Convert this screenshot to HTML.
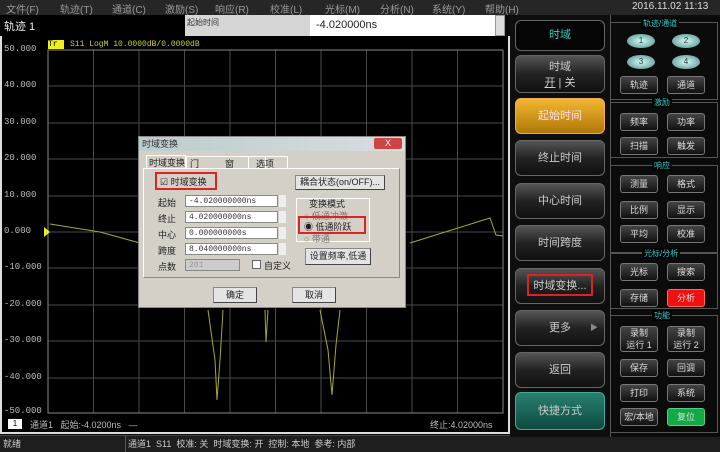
<!DOCTYPE html>
<html><head><meta charset="utf-8"><style>
*{margin:0;padding:0;box-sizing:border-box}
body{width:720px;height:452px;background:#0a0a0a;position:relative;overflow:hidden;font-family:"Liberation Sans","Noto Sans CJK SC",sans-serif;font-size:10px;color:#ccc}
.a{position:absolute}
.menu{left:0;top:0;width:720px;height:15px;background:#262626;color:#999;font-size:10px}
.menu span{position:absolute;top:1px}
.sk{position:absolute;left:515px;width:90px;border:1px solid #666;border-radius:6px;background:linear-gradient(#555,#222 50%,#111);color:#ccc;font-size:11px;text-align:center}
.rb{position:absolute;width:38px;height:18px;border:1px solid #777;border-radius:3px;background:linear-gradient(#444,#111);color:#ddd;font-size:9px;text-align:center;line-height:16px}
.sec{position:absolute;left:610px;width:108px;border:1px solid #555;}
.st{position:absolute;font-size:8px;color:#3cc;background:#000;padding:0 2px}
.ov{position:absolute;width:28px;height:14px;border-radius:50%;background:radial-gradient(#cfe,#7aa 70%,#466);color:#234;font-size:8px;text-align:center;line-height:14px}
.yl{position:absolute;left:4px;width:40px;color:#bbb;font-family:"Liberation Mono",monospace;font-size:9px}
.dl{position:absolute;font-size:9px;color:#222;white-space:nowrap}
.inp{position:absolute;background:#fff;border:1px solid #888;height:12px;font-size:8px;color:#333;padding-left:3px;line-height:11px;font-family:"Liberation Mono",monospace}
.btn{position:absolute;background:#e4e4e4;border:1px solid #888;border-right-color:#444;border-bottom-color:#444;font-size:9px;color:#222;text-align:center;white-space:nowrap}
</style></head><body>
<div class="a menu">
<span style="left:6px">文件(F)</span><span style="left:60px">轨迹(T)</span><span style="left:112px">通道(C)</span><span style="left:165px">激励(S)</span><span style="left:215px">响应(R)</span><span style="left:270px">校准(L)</span><span style="left:325px">光标(M)</span><span style="left:380px">分析(N)</span><span style="left:432px">系统(Y)</span><span style="left:485px">帮助(H)</span><span style="left:632px;color:#ddd">2016.11.02 11:13</span>
</div>
<div class="a" style="left:0;top:15px;width:185px;height:21px;background:#000;color:#eee;font-size:11px;padding:3px 4px">轨迹 1</div>
<div class="a" style="left:185px;top:15px;width:125px;height:21px;background:#d6d6d6;color:#333;font-size:8px;padding:2px">起始时间</div>
<div class="a" style="left:310px;top:15px;width:185px;height:21px;background:#fff;color:#222;font-size:11px;padding:4px 6px">-4.020000ns</div>
<div class="a" style="left:495px;top:15px;width:10px;height:21px;background:#ddd;border:1px solid #999"></div>
<div class="a" style="left:0;top:36px;width:510px;height:398px;border:2px solid #ddd;border-top:none;background:#000"></div>
<div class="a" style="left:48px;top:40px;width:16px;height:9px;background:#ee2;color:#000;font-size:8px;font-family:'Liberation Mono',monospace;line-height:9px">Tr 1</div>
<div class="a" style="left:70px;top:40px;color:#cc3;font-size:8px;font-family:'Liberation Mono',monospace">S11 LogM 10.0000dB/0.0000dB</div>
<svg class="a" style="left:0;top:0" width="510" height="434">
<g stroke="#4a4a4a" stroke-width="1">
<path d="M48 50H503M48 86H503M48 123H503M48 159H503M48 196H503M48 232H503M48 268H503M48 305H503M48 341H503M48 378H503M48 413H503"/>
<path d="M48 50V413M93.5 50V413M139 50V413M184.5 50V413M230 50V413M275.5 50V413M321 50V413M366.5 50V413M412 50V413M457.5 50V413M503 50V413"/>
</g>
<rect x="48" y="50" width="455" height="363" fill="none" stroke="#888"/>
<g stroke="#a8a830" stroke-width="1" fill="none">
<path d="M50 224L100 232L140 243"/>
<path d="M410 243L490 218L496 235L503 236"/>
<path d="M208 310L215 360L217 400L220 360L223 310"/>
<path d="M265 310L266 342L268 310"/>
<path d="M320 310L328 350L332 395L336 345L340 310"/>
</g>
<path d="M44 227L50 232L44 237Z" fill="#ee2"/>
</svg>
<div class="yl" style="top:44px">50.000</div>
<div class="yl" style="top:80px">40.000</div>
<div class="yl" style="top:117px">30.000</div>
<div class="yl" style="top:153px">20.000</div>
<div class="yl" style="top:190px">10.000</div>
<div class="yl" style="top:226px">0.000</div>
<div class="yl" style="top:262px">-10.000</div>
<div class="yl" style="top:299px">-20.000</div>
<div class="yl" style="top:335px">-30.000</div>
<div class="yl" style="top:372px">-40.000</div>
<div class="yl" style="top:406px">-50.000</div>
<div class="a" style="left:8px;top:419px;width:14px;height:10px;background:#fff;color:#000;font-size:8px;text-align:center;line-height:10px">1</div>
<div class="a" style="left:30px;top:418px;color:#bbb;font-size:9px">通道1 &nbsp;&nbsp;起始:-4.0200ns &nbsp;&nbsp;—</div>
<div class="a" style="left:430px;top:418px;color:#bbb;font-size:9px">终止:4.02000ns</div>
<div class="a" style="left:0;top:435px;width:720px;height:17px;background:#1e1e1e;border-top:1px solid #444"></div>
<div class="a" style="left:3px;top:437px;color:#ccc;font-size:9px">就绪</div>
<div class="a" style="left:125px;top:435px;width:1px;height:17px;background:#555"></div>
<div class="a" style="left:128px;top:437px;color:#ccc;font-size:9px">通道1 &nbsp;S11 &nbsp;校准: 关 &nbsp;时域变换: 开 &nbsp;控制: 本地 &nbsp;参考: 内部</div>
<!-- dialog -->
<div class="a" style="left:138px;top:136px;width:268px;height:172px;background:#d4d0c8;border:1px solid #888"></div>
<div class="a" style="left:139px;top:137px;width:266px;height:14px;background:linear-gradient(90deg,#bcc,#d8dde0);color:#333;font-size:9px;padding-left:3px">时域变换</div>
<div class="a" style="left:374px;top:138px;width:28px;height:11px;background:#c44;color:#fff;font-size:9px;text-align:center;line-height:11px;border-radius:2px">X</div>
<div class="a" style="left:146px;top:155px;width:40px;height:13px;background:#d4d0c8;border:1px solid #fff;border-bottom:none;font-size:9px;color:#222;padding-left:2px;white-space:nowrap">时域变换</div>
<div class="a" style="left:186px;top:156px;width:80px;height:12px;border:1px solid #fff;border-bottom:none"></div>
<div class="dl" style="left:190px;top:157px">门</div>
<div class="dl" style="left:225px;top:157px">窗</div>
<div class="a" style="left:248px;top:156px;width:40px;height:12px;border:1px solid #fff;border-bottom:none"></div>
<div class="dl" style="left:256px;top:157px">选项</div>
<div class="a" style="left:143px;top:168px;width:257px;height:110px;border:1px solid #fff;border-right-color:#888;border-bottom-color:#888"></div>
<div class="a" style="left:155px;top:172px;width:62px;height:18px;border:2px solid #d22"></div>
<div class="dl" style="left:160px;top:175px">☑ 时域变换</div>
<div class="dl" style="left:158px;top:196px">起始</div><div class="inp" style="left:185px;top:195px;width:93px">-4.020000000ns</div>
<div class="dl" style="left:158px;top:212px">终止</div><div class="inp" style="left:185px;top:211px;width:93px">4.020000000ns</div>
<div class="dl" style="left:158px;top:228px">中心</div><div class="inp" style="left:185px;top:227px;width:93px">0.000000000s</div>
<div class="dl" style="left:158px;top:244px">跨度</div><div class="inp" style="left:185px;top:243px;width:93px">8.040000000ns</div>
<div class="dl" style="left:158px;top:260px">点数</div><div class="inp" style="left:185px;top:259px;width:55px;background:#ccc;color:#999">201</div>
<div class="a" style="left:279px;top:195px;width:7px;height:60px;background:repeating-linear-gradient(#eee 0 12px,#d4d0c8 12px 16px)"></div>
<div class="a" style="left:252px;top:260px;width:9px;height:9px;background:#fff;border:1px solid #666"></div>
<div class="dl" style="left:264px;top:259px">自定义</div>
<div class="btn" style="left:295px;top:175px;width:90px;height:15px;line-height:13px">耦合状态(on/OFF)...</div>
<div class="a" style="left:296px;top:198px;width:74px;height:44px;border:1px solid #fff"></div>
<div class="dl" style="left:309px;top:197px">变换模式</div>
<div class="dl" style="left:304px;top:209px;color:#777">○ 低通冲激</div>
<div class="a" style="left:298px;top:216px;width:68px;height:18px;border:2px solid #d22"></div>
<div class="dl" style="left:304px;top:220px">◉ 低通阶跃</div>
<div class="dl" style="left:304px;top:232px;color:#777">○ 带通</div>
<div class="btn" style="left:305px;top:248px;width:66px;height:17px;line-height:15px">设置频率,低通</div>
<div class="btn" style="left:213px;top:287px;width:44px;height:16px;line-height:14px">确定</div>
<div class="btn" style="left:292px;top:287px;width:44px;height:16px;line-height:14px">取消</div>
<!-- softkeys -->
<div class="a" style="left:510px;top:15px;width:100px;height:422px;background:#0e0e0e"></div>
<div class="sk" style="top:20px;height:31px;background:#050505;color:#3cb;line-height:29px">时域</div>
<div class="sk" style="top:55px;height:38px;padding-top:3px;line-height:16px">时域<br><u>开</u> | 关</div>
<div class="sk" style="top:98px;height:36px;line-height:34px;background:linear-gradient(#f2b730,#b07808);color:#fde;border-color:#ea5">起始时间</div>
<div class="sk" style="top:140px;height:36px;line-height:34px">终止时间</div>
<div class="sk" style="top:183px;height:36px;line-height:34px">中心时间</div>
<div class="sk" style="top:225px;height:36px;line-height:34px">时间跨度</div>
<div class="sk" style="top:268px;height:36px;line-height:34px">时域变换...</div>
<div class="a" style="left:527px;top:274px;width:66px;height:22px;border:2px solid #d22"></div>
<div class="sk" style="top:310px;height:36px;line-height:34px">更多 <span style="position:absolute;right:6px;font-size:8px;color:#888">▶</span></div>
<div class="sk" style="top:352px;height:36px;line-height:34px">返回</div>
<div class="sk" style="top:392px;height:38px;line-height:36px;background:linear-gradient(#2a8070,#0d4a40);border-color:#4a9">快捷方式</div>
<!-- right panel -->
<div class="a" style="left:610px;top:15px;width:110px;height:422px;background:#0b0b0b;border-left:1px solid #555"></div>
<div class="sec" style="top:22px;height:78px"></div><div class="st" style="left:641px;top:18px">轨迹/通道</div>
<div class="ov" style="left:627px;top:34px">1</div><div class="ov" style="left:672px;top:34px">2</div>
<div class="ov" style="left:627px;top:55px">3</div><div class="ov" style="left:672px;top:55px">4</div>
<div class="rb" style="left:620px;top:76px">轨迹</div><div class="rb" style="left:667px;top:76px">通道</div>
<div class="sec" style="top:102px;height:56px"></div><div class="st" style="left:652px;top:97px">激励</div>
<div class="rb" style="left:620px;top:113px">频率</div><div class="rb" style="left:667px;top:113px">功率</div>
<div class="rb" style="left:620px;top:137px">扫描</div><div class="rb" style="left:667px;top:137px">触发</div>
<div class="sec" style="top:165px;height:88px"></div><div class="st" style="left:652px;top:160px">响应</div>
<div class="rb" style="left:620px;top:175px">测量</div><div class="rb" style="left:667px;top:175px">格式</div>
<div class="rb" style="left:620px;top:201px">比例</div><div class="rb" style="left:667px;top:201px">显示</div>
<div class="rb" style="left:620px;top:225px">平均</div><div class="rb" style="left:667px;top:225px">校准</div>
<div class="sec" style="top:253px;height:56px"></div><div class="st" style="left:642px;top:248px">光标/分析</div>
<div class="rb" style="left:620px;top:263px">光标</div><div class="rb" style="left:667px;top:263px">搜索</div>
<div class="rb" style="left:620px;top:289px">存储</div><div class="rb" style="left:667px;top:289px;background:#e11;border-color:#f66">分析</div>
<div class="sec" style="top:315px;height:118px"></div><div class="st" style="left:652px;top:310px">功能</div>
<div class="rb" style="left:620px;top:326px;height:26px;line-height:12px">录制<br>运行 1</div><div class="rb" style="left:667px;top:326px;height:26px;line-height:12px">录制<br>运行 2</div>
<div class="rb" style="left:620px;top:359px">保存</div><div class="rb" style="left:667px;top:359px">回调</div>
<div class="rb" style="left:620px;top:384px">打印</div><div class="rb" style="left:667px;top:384px">系统</div>
<div class="rb" style="left:620px;top:408px">宏/本地</div><div class="rb" style="left:667px;top:408px;background:#1a4;border-color:#5c8">复位</div>
</body></html>
